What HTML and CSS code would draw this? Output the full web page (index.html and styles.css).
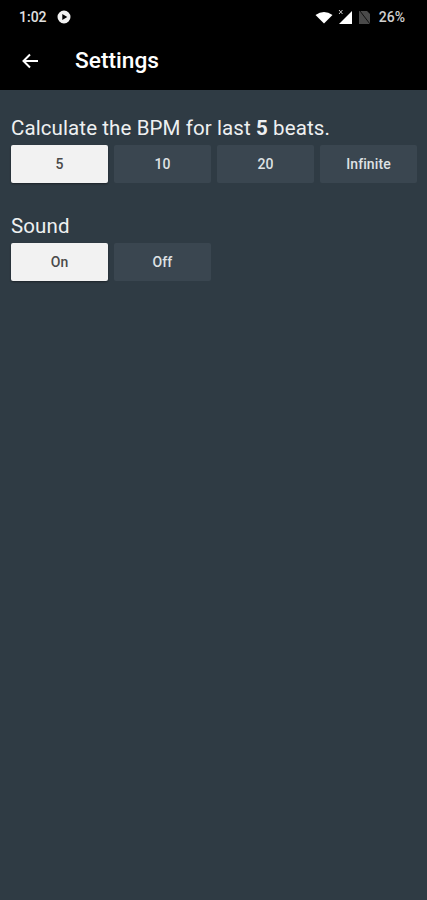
FILE: index.html
```html
<!DOCTYPE html>
<html lang="en">
<head>
<meta charset="utf-8">
<title>Settings</title>
<link rel="stylesheet" href="styles.css">
</head>
<body>
<header class="top">
  <div class="status">
    <div class="status-left">
      <span class="time">1:02</span>
      <svg class="play" width="14" height="14" viewBox="0 0 14 14"><path fill="#f2f2f2" fill-rule="evenodd" d="M7 0.500a6.500 6.500 0 1 0 0 13a6.500 6.500 0 1 0 0-13zM5.300 4l5 3l-5 3z"/></svg>
    </div>
    <div class="status-right">
      <svg class="ic-wifi" width="18" height="13" viewBox="0 0 18 13"><path fill="#fff" d="M0.500 4Q9 -2 17.500 4L9 12.500z"/></svg>
      <svg class="ic-signal" width="16" height="16" viewBox="0 0 16 16"><path fill="#fff" d="M15 2V15H2z"/><path stroke="#ccc" stroke-width="1" fill="none" d="M2 1l3.500 4M5.500 1l-3.500 4"/></svg>
      <svg class="ic-batt" width="13" height="15" viewBox="0 0 13 15"><path fill="#4a4a4a" d="M1 1H9L12 4V14H1z"/><path stroke="#111" stroke-width="1" d="M2 1L12 14"/></svg>
      <span class="pct">26%</span>
    </div>
  </div>
  <div class="bar">
    <svg class="back" width="18" height="16" viewBox="0 0 18 16"><path fill="none" stroke="#fff" stroke-width="2" d="M17 8H2.500M9 1.500L2.500 8L9 14.500"/></svg>
    <h1 class="title">Settings</h1>
  </div>
</header>
<main class="content">
  <section class="group">
    <p class="label">Calculate the BPM for last <b>5</b> beats.</p>
    <div class="buttons">
      <button class="btn on">5</button>
      <button class="btn">10</button>
      <button class="btn">20</button>
      <button class="btn">Infinite</button>
    </div>
  </section>
  <section class="group">
    <p class="label">Sound</p>
    <div class="buttons">
      <button class="btn on">On</button>
      <button class="btn">Off</button>
    </div>
  </section>
</main>
</body>
</html>
```
FILE: styles.css
```css
* { box-sizing: border-box; }
html, body { margin: 0; height: 900px; overflow: hidden; }
body {
  background: #2f3b44;
  font-family: Roboto, "Liberation Sans", sans-serif;
  display: flex;
  flex-direction: column;
}
.top { background: #000; height: 90px; color: #fff; flex: none; }
.status {
  height: 33px;
  padding: 1px 22px 0 19px;
  display: flex;
  align-items: center;
  justify-content: space-between;
}
.status-left { display: flex; align-items: center; gap: 10px; }
.status-right { display: flex; align-items: center; }
.time { font-size: 14px; font-weight: 500; color: #e0e0e0; }
.ic-signal { margin-left: 4px; }
.ic-batt { margin-left: 5px; }
.pct { font-size: 14px; font-weight: 500; color: #d0d0d0; margin-left: 8px; }
.bar { height: 57px; display: flex; align-items: center; padding: 0 0 1px 21px; }
.title { margin: 0 0 0 36px; font-size: 22.7px; font-weight: 500; line-height: 28px; }
.content { padding: 26px 10px 0 11px; flex: 1; }
.group { margin-bottom: 31px; }
.label { margin: 0; font-size: 20.5px; line-height: 24px; color: #eef0f1; height: 29px; letter-spacing: 0.1px; }
.label b { font-weight: 700; }
.buttons { display: grid; grid-template-columns: repeat(4, 1fr); gap: 6px; }
.btn {
  height: 38px;
  border: 0;
  border-radius: 2px;
  background: #3a4650;
  color: #dfe2e4;
  font-family: Roboto, "Liberation Sans", sans-serif;
  font-size: 14px;
  font-weight: 500;
  letter-spacing: 0.1px;
  padding: 0;
}
.btn.on { background: #f2f2f2; color: #4a4a4a; box-shadow: 0 1px 2px rgba(0, 0, 0, 0.4); }
```
